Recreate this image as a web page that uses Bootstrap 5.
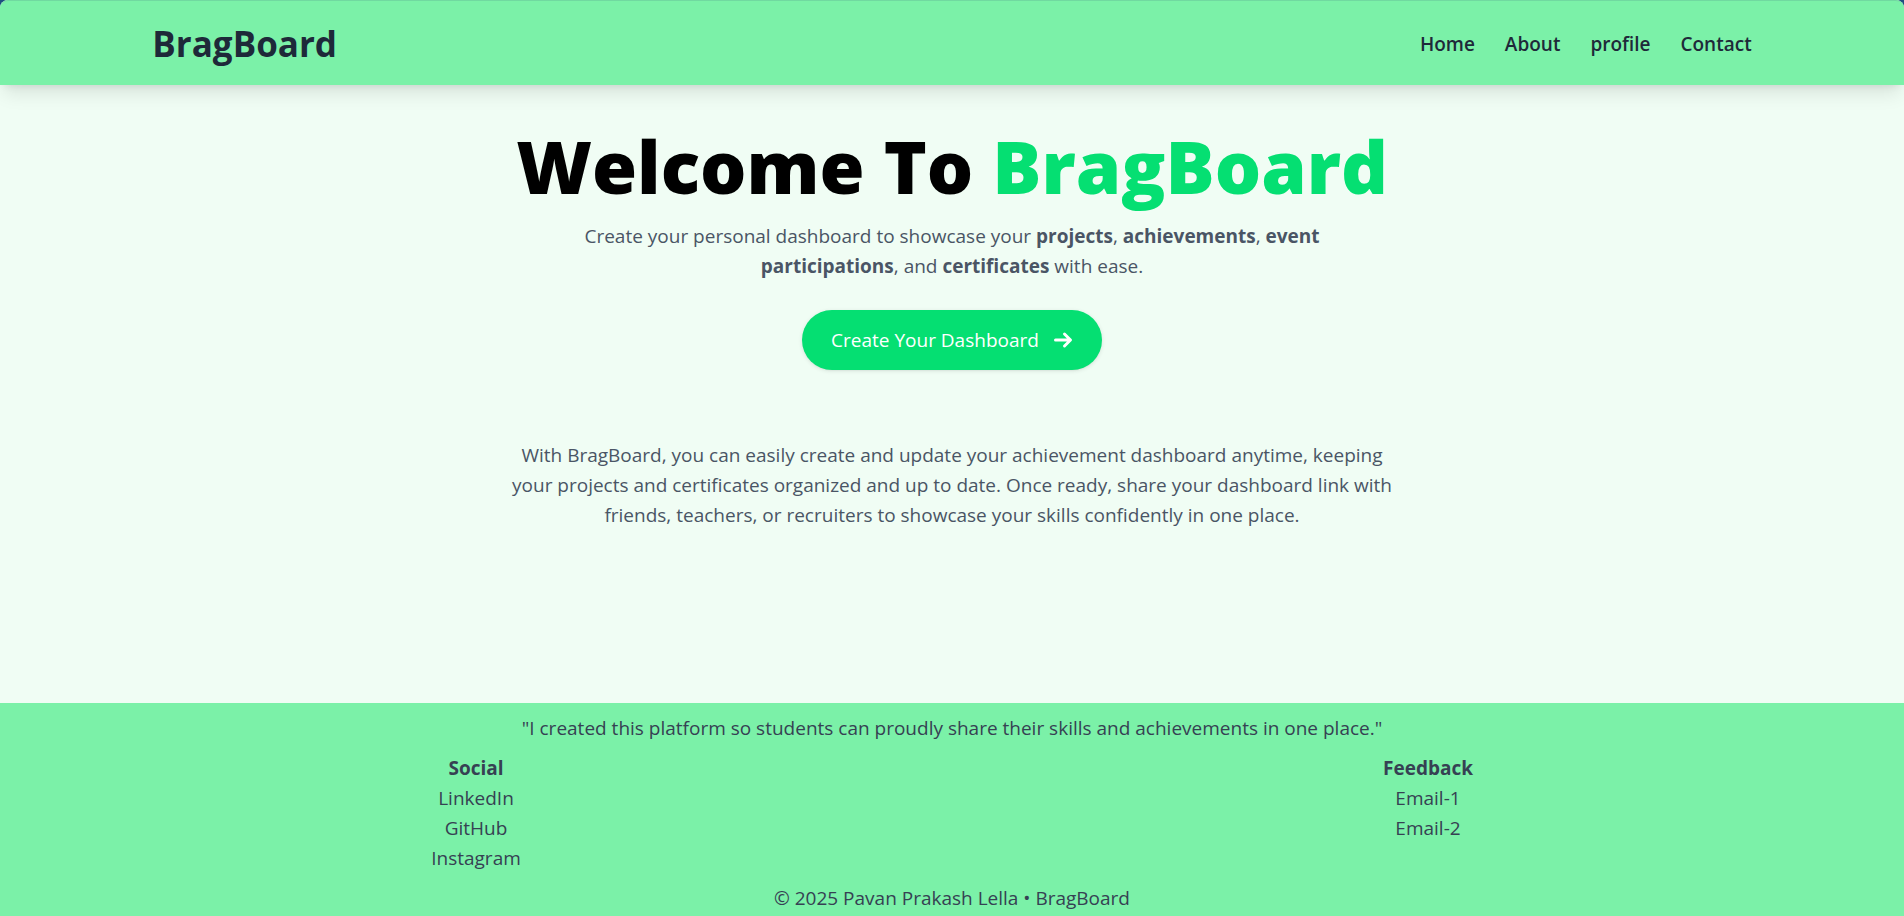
<!DOCTYPE html>
<html lang="en">
<head>
<meta charset="utf-8">
<meta name="viewport" content="width=device-width, initial-scale=1">
<title>BragBoard</title>
<link href="https://cdn.jsdelivr.net/npm/bootstrap@5.3.0/dist/css/bootstrap.min.css" rel="stylesheet">
<style>
  body { font-family: "Open Sans", "Noto Sans", sans-serif; font-size: 19px; line-height: 30px; background: #1c4f80; color: #4a5565; }
  .page-shell { background: #f0fdf4; border-radius: 8px 8px 0 0; }
  .site-header { background: #7bf1a8; border-top: 1px solid #70d9a0; border-radius: 8px 8px 0 0; padding: 21px 8% 19px; box-shadow: 0 12px 19px -4px rgba(0,0,0,.1), 0 5px 8px -5px rgba(0,0,0,.1); }
  .site-header a { color: #1e2939; text-decoration: none; }
  .site-brand { font-size: 35px; line-height: 44px; font-weight: 700; }
  .site-links { gap: 30px; font-weight: 600; }
  .hero-title { font-size: 73px; line-height: 75px; font-weight: 800; color: #000; margin: 43px 0 18px; }
  .hero-title span { color: #05df72; }
  .hero-lead { max-width: 740px; margin-bottom: 29px; }
  .hero-note { max-width: 880px; margin-top: 70px; }
  .btn-create { --bs-btn-color: #fff; --bs-btn-hover-color: #fff; --bs-btn-bg: #05df72; --bs-btn-hover-bg: #00c961; --bs-btn-border-width: 0; --bs-btn-padding-x: 29px; --bs-btn-padding-y: 15px; --bs-btn-font-size: 19px; --bs-btn-line-height: 30px; gap: 14px; box-shadow: 0 1px 4px rgba(0,0,0,.1), 0 1px 2px -1px rgba(0,0,0,.1); }
  .site-footer { background: #7bf1a8; color: #364153; padding: 10px 0 3px; }
  .site-footer a { color: inherit; text-decoration: none; }
  .site-footer h2 { font-size: 19px; line-height: 30px; font-weight: 700; margin: 0; }
  .footer-cols { margin: 10px 0; }
</style>
</head>
<body>
<div class="page-shell min-vh-100 d-flex flex-column text-center">
  <header class="site-header d-flex justify-content-between align-items-center">
    <a class="site-brand" href="#">BragBoard</a>
    <nav class="site-links d-flex">
      <a href="#">Home</a>
      <a href="#">About</a>
      <a href="#">profile</a>
      <a href="#">Contact</a>
    </nav>
  </header>
  <main class="flex-grow-1 d-flex flex-column align-items-center">
    <h1 class="hero-title">Welcome To <span>BragBoard</span></h1>
    <p class="hero-lead">Create your personal dashboard to showcase your <strong>projects</strong>, <strong>achievements</strong>, <strong>event participations</strong>, and <strong>certificates</strong> with ease.</p>
    <button type="button" class="btn btn-create rounded-pill d-inline-flex align-items-center">
      Create Your Dashboard
      <svg width="20" height="20" viewBox="0 0 20 20" fill="none" stroke="currentColor" stroke-width="3" stroke-linecap="round" stroke-linejoin="round" aria-hidden="true"><path d="M2.500 10H17M11.500 4l6 6-6 6"/></svg>
    </button>
    <p class="hero-note">With BragBoard, you can easily create and update your achievement dashboard anytime, keeping your projects and certificates organized and up to date. Once ready, share your dashboard link with friends, teachers, or recruiters to showcase your skills confidently in one place.</p>
  </main>
  <footer class="site-footer">
    <p class="mb-0">"I created this platform so students can proudly share their skills and achievements in one place."</p>
    <div class="footer-cols row g-0">
      <div class="col-6">
        <h2>Social</h2>
        <ul class="list-unstyled mb-0">
          <li><a href="#">LinkedIn</a></li>
          <li><a href="#">GitHub</a></li>
          <li><a href="#">Instagram</a></li>
        </ul>
      </div>
      <div class="col-6">
        <h2>Feedback</h2>
        <ul class="list-unstyled mb-0">
          <li><a href="#">Email-1</a></li>
          <li><a href="#">Email-2</a></li>
        </ul>
      </div>
    </div>
    <p class="mb-0">© 2025 Pavan Prakash Lella • BragBoard</p>
  </footer>
</div>
<script src="https://cdn.jsdelivr.net/npm/bootstrap@5.3.0/dist/js/bootstrap.bundle.min.js"></script>
</body>
</html>
